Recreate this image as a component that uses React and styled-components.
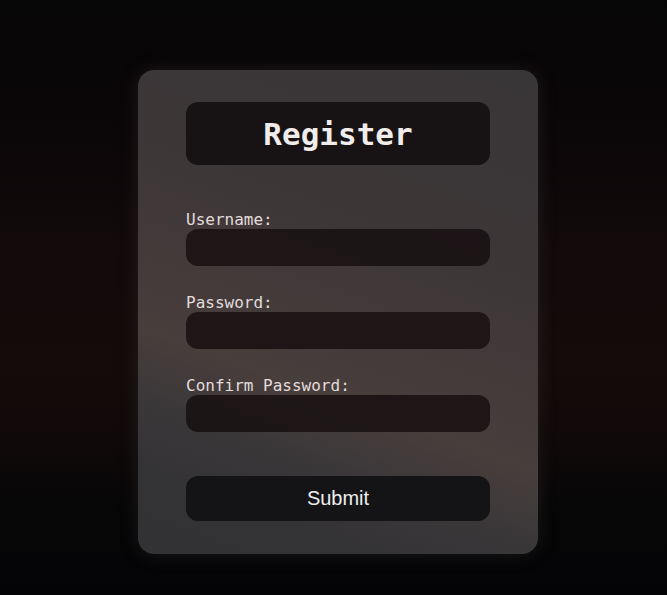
import React from "react";
import styled, { createGlobalStyle } from "styled-components";

const fields = ["Username:", "Password:", "Confirm Password:"];

const GlobalStyle = createGlobalStyle`
  html, body {
    margin: 0;
    padding: 0;
  }
  body {
    background: #060506;
    font-family: "DejaVu Sans Mono", "Liberation Mono", monospace;
  }
  * {
    box-sizing: border-box;
  }
`;

const App = () => {
  return (
    <Page>
      <GlobalStyle />
      <Card>
        <TitleBox>
          <Title>Register</Title>
        </TitleBox>
        <Form onSubmit={(e) => e.preventDefault()}>
          {fields.map((label) => (
            <Field key={label}>
              <Label>{label}</Label>
              <Input type={label === "Username:" ? "text" : "password"} />
            </Field>
          ))}
          <SubmitButton type="submit">Submit</SubmitButton>
        </Form>
      </Card>
    </Page>
  );
};

const Page = styled.div`
  width: 100%;
  height: 595px;
  display: flex;
  justify-content: center;
  padding: 70px 0 0 9px;
  background: linear-gradient(
    180deg,
    #060506 0%,
    #0b0608 22%,
    #120a0b 42%,
    #150b0b 62%,
    #100909 74%,
    #060607 86%,
    #040406 100%
  );
`;

const Card = styled.div`
  width: 400px;
  height: 484px;
  padding: 32px 48px;
  border-radius: 16px;
  background: linear-gradient(
    200deg,
    #393637 0%,
    #3c3637 30%,
    #433a3a 52%,
    #483e3c 64%,
    #3a3739 76%,
    #333235 88%,
    #323234 100%
  );
  box-shadow: 0 0 18px rgba(70, 60, 60, 0.35);
  display: flex;
  flex-direction: column;
`;

const TitleBox = styled.div`
  height: 63px;
  border-radius: 12px;
  background: #171314;
  display: flex;
  align-items: center;
  justify-content: center;
`;

const Title = styled.h1`
  margin: 0;
  font-family: "DejaVu Sans Mono", "Liberation Mono", monospace;
  font-size: 31px;
  font-weight: bold;
  color: #f1ecec;
`;

const Form = styled.form`
  display: flex;
  flex-direction: column;
  margin-top: 45px;
  gap: 27px;
`;

const Field = styled.div`
  display: flex;
  flex-direction: column;
  gap: 0;
`;

const Label = styled.label`
  font-size: 16px;
  line-height: 19px;
  color: #e2dcdc;
`;

const Input = styled.input`
  height: 37px;
  border: none;
  outline: none;
  border-radius: 12px;
  background: rgba(20, 12, 14, 0.8);
  color: #eee;
  padding: 0 12px;
  font-family: inherit;
  font-size: 16px;
`;

const SubmitButton = styled.button`
  margin-top: 17px;
  height: 45px;
  border: none;
  border-radius: 12px;
  background: #141417;
  color: #eeeeee;
  font-family: "Liberation Sans", Arial, sans-serif;
  font-size: 20px;
  cursor: pointer;
`;

export default App;
